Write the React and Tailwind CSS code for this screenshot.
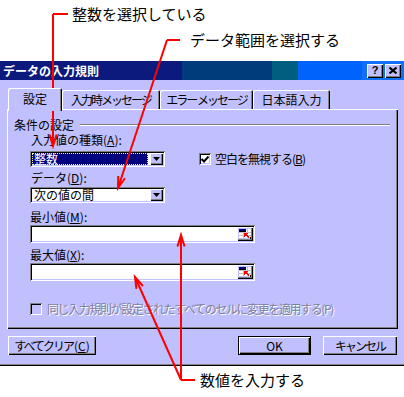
import React from 'react';

const raised = 'shadow-[inset_1px_1px_0_#fff,inset_-1px_-1px_0_#000,inset_-2px_-2px_0_#808080]';
const sunken = 'shadow-[inset_1px_1px_0_#808080,inset_-1px_-1px_0_#fff,inset_2px_2px_0_#000,inset_-2px_-2px_0_#c0c0ff]';

// arrow path with open V head, tip at (x2, y2)
const arrow = (x1, y1, x2, y2) => {
  const a = Math.atan2(y2 - y1, x2 - x1);
  const L = 12;
  const s = 0.3;
  const p1 = [x2 - L * Math.cos(a - s), y2 - L * Math.sin(a - s)];
  const p2 = [x2 - L * Math.cos(a + s), y2 - L * Math.sin(a + s)];
  return `M${x1},${y1} L${x2},${y2} M${p1[0]},${p1[1]} L${x2},${y2} L${p2[0]},${p2[1]}`;
};

const DropButton = () => (
  <div className={`w-[13px] h-full bg-[#c0c0ff] flex items-center justify-center ${raised}`}>
    <svg width="7" height="4" viewBox="0 0 7 4">
      <path d="M0 0 H7 L3.5 4 Z" fill="#000" />
    </svg>
  </div>
);

const RefButton = () => (
  <div className={`w-[16px] h-full bg-[#c0c0ff] flex items-center justify-center ${raised}`}>
    <svg width="12" height="10" viewBox="0 0 12 10" shapeRendering="crispEdges">
      <rect x="0" y="0" width="12" height="9" fill="#fff" />
      <path d="M0 3.5 H12 M0 6.5 H12 M4.5 0 V9 M8.5 0 V9" stroke="#c0c0c0" strokeWidth="1" />
      <rect x="0" y="0" width="7" height="2" fill="#000080" />
      <rect x="0" y="2" width="7" height="1" fill="#000" />
      <path d="M5 4 L9 4 L7.5 5.5 L10 8 L9 9 L6.5 6.5 L5 8 Z" fill="#ff0000" />
      <rect x="11" y="8" width="1" height="2" fill="#000" />
    </svg>
  </div>
);

const Label = ({ text, u, className = '' }) => (
  <div className={`h-[14px] leading-[14px] text-[12px] whitespace-nowrap ${className}`}>
    {text}(<u>{u}</u>):
  </div>
);

const Tab = ({ children, w, selected, tight }) => (
  <div
    className={`${w} flex items-center justify-center text-[12px] whitespace-nowrap bg-[#c0c0ff] rounded-t-[2px] shadow-[inset_1px_1px_0_#fff,inset_-1px_0_0_#000,inset_-2px_0_0_#808080] ${
      tight ? 'tracking-[-2px]' : ''
    } ${selected ? 'relative z-10 h-[23px] -mb-[2px] pb-[2px]' : 'h-[19px]'}`}
  >
    {children}
  </div>
);

export default function App() {
  return (
    <div className="relative w-[404px] h-[397px] bg-white overflow-hidden text-black font-['Noto_Sans_CJK_JP',sans-serif]">
      {/* annotations on top */}
      <div className="h-[61px] pt-[4px] text-[15px]">
        <div className="h-[20px] leading-[20px] pl-[72px]">整数を選択している</div>
        <div className="h-[20px] leading-[20px] pl-[190px] mt-[6px]">データ範囲を選択する</div>
      </div>

      {/* dialog */}
      <div className="h-[305px] bg-[#c0c0ff] shadow-[inset_0_-1px_0_#000,inset_0_-2px_0_#808080]">
        {/* title bar */}
        <div className="h-[19px] flex items-center justify-between pl-[3px] pr-[3px] bg-[linear-gradient(to_right,#0c1a7e_0,#0c1a7e_182px,#003c7c_182px,#003c7c_272px,#005e80_272px,#005e80_298px,#0064fc_298px,#0064fc_362px,#1070fc_362px)]">
          <div className="text-white font-bold text-[12px] leading-[14px]">データの入力規則</div>
          <div className="flex gap-[2px]">
            <div className={`w-[16px] h-[14px] bg-[#c0c0ff] flex items-center justify-center text-[11px] font-bold leading-none font-['Liberation_Sans',sans-serif] ${raised}`}>
              ?
            </div>
            <div className={`w-[16px] h-[14px] bg-[#c0c0ff] flex items-center justify-center ${raised}`}>
              <svg width="8" height="7" viewBox="0 0 8 7">
                <path d="M0.5 0.5 L7.5 6.5 M7.5 0.5 L0.5 6.5" stroke="#000" strokeWidth="2" />
              </svg>
            </div>
          </div>
        </div>

        {/* tabs */}
        <div className="mt-[8px] h-[21px] pl-[8px] flex items-end">
          <Tab w="w-[54px]" selected>設定</Tab>
          <Tab w="w-[98px]" tight>入力時メッセージ</Tab>
          <Tab w="w-[93px]" tight>エラー メッセージ</Tab>
          <Tab w="w-[77px]">日本語入力</Tab>
        </div>

        {/* panel */}
        <div className={`ml-[7px] w-[391px] h-[220px] ${raised} pt-[9px]`}>
          <div className="h-[14px] flex items-center pl-[7px] pr-[8px] text-[12px]">
            <span className="leading-[14px]">条件の設定</span>
            <div className="flex-1 ml-[6px] border-t border-[#808080] border-b border-b-white" />
          </div>

          <div className="pl-[23px]">
            <Label text="入力値の種類" u="A" className="mt-[1px] pl-[1px]" />
            <div className="mt-[4px] flex items-center">
              <div className={`w-[135px] h-[16px] bg-white p-[2px] flex ${sunken}`}>
                <div className="flex-1 mr-[2px] bg-[#000080] outline-1 outline-dotted outline-[#ffff80] -outline-offset-1 text-white text-[12px] leading-[12px] pl-[2px]">
                  整数
                </div>
                <DropButton />
              </div>
              <div className="ml-[34px] flex items-center">
                <div className={`w-[12px] h-[12px] bg-white flex items-center justify-center ${sunken}`}>
                  <svg width="8" height="7" viewBox="0 0 8 7">
                    <path d="M0.5 3 L3 5.5 L7.5 0.5" stroke="#000" strokeWidth="2" fill="none" />
                  </svg>
                </div>
                <div className="ml-[4px] text-[12px] leading-[14px] tracking-[-1px] whitespace-nowrap">
                  空白を無視する(<u>B</u>)
                </div>
              </div>
            </div>

            <Label text="データ" u="D" className="mt-[4px] pl-[1px]" />
            <div className={`mt-[2px] w-[135px] h-[16px] bg-white p-[2px] flex ${sunken}`}>
              <div className="flex-1 text-[12px] leading-[12px] pl-[2px]">次の値の間</div>
              <DropButton />
            </div>

            <Label text="最小値" u="M" className="mt-[7px]" />
            <div className={`mt-[1px] w-[225px] h-[18px] bg-white p-[2px] flex justify-end ${sunken}`}>
              <RefButton />
            </div>

            <Label text="最大値" u="X" className="mt-[5px]" />
            <div className={`mt-[1px] w-[225px] h-[18px] bg-white p-[2px] flex justify-end ${sunken}`}>
              <RefButton />
            </div>

            <div className="mt-[21px] flex items-center">
              <div className={`w-[12px] h-[12px] bg-[#c0c0ff] ${sunken}`} />
              <div className="ml-[5px] text-[12px] leading-[14px] text-[#8080a0] tracking-[-1.4px] whitespace-nowrap [text-shadow:1px_1px_0_#fff]">
                同じ入力規則が設定されたすべてのセルに変更を適用する(P)
              </div>
            </div>
          </div>
        </div>

        {/* buttons */}
        <div className="mt-[7px] h-[19px] flex text-[12px] whitespace-nowrap">
          <div className={`ml-[8px] w-[88px] h-full flex items-center justify-center ${raised}`}>
            <span className="tracking-[-2px]">すべてクリア</span>
            <span className="ml-[1px]">(<u>C</u>)</span>
          </div>
          <div className="ml-[142px] w-[73px] h-full border border-black">
            <div className={`w-full h-full flex items-center justify-center ${raised}`}>OK</div>
          </div>
          <div className={`ml-[12px] w-[74px] h-full flex items-center justify-center tracking-[-2px] ${raised}`}>
            キャンセル
          </div>
        </div>
      </div>

      {/* bottom annotation */}
      <div className="mt-[4px] pl-[200px] h-[20px] leading-[20px] text-[15px]">数値を入力する</div>

      {/* red callout lines */}
      <svg className="absolute inset-0 pointer-events-none" width="404" height="397" viewBox="0 0 404 397">
        <g stroke="#ff0000" strokeWidth="2" fill="none">
          <path d="M68,14 L53,14" />
          <path d={arrow(53, 14, 53, 146)} />
          <path d="M180,40 L167,40" />
          <path d={arrow(167, 40, 118, 188)} />
          <path d="M195,380 L181,380" />
          <path d={arrow(181, 380, 181, 235)} />
          <path d={arrow(181, 380, 135, 277)} />
        </g>
      </svg>
    </div>
  );
}
